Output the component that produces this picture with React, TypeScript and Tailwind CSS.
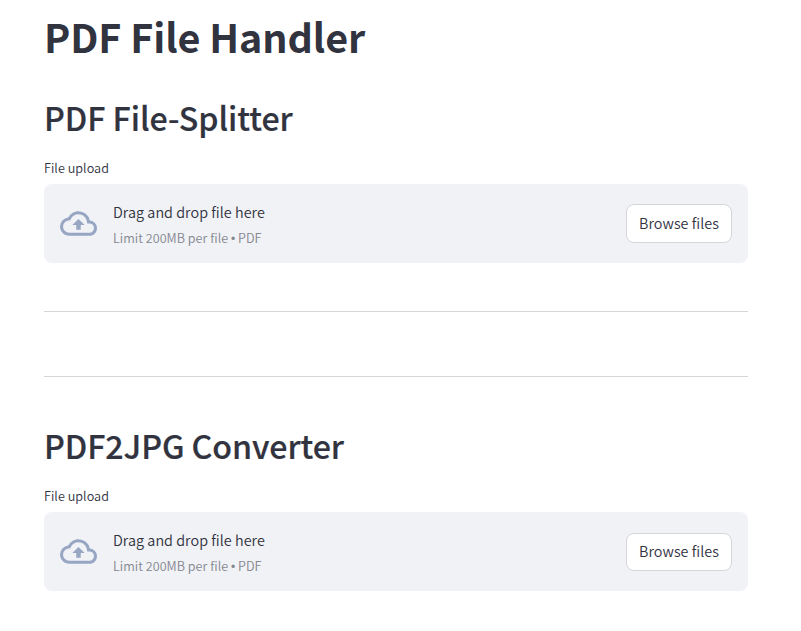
import React from "react";

function Uploader({ buttonClass }: { buttonClass: string }) {
  return (
    <div>
      <div className="flex h-6 items-center text-[12.6px] leading-[22px] tracking-[0.04px]">
        <span className="font-[350]">File upload</span>
      </div>
      <section className="mt-1 flex h-[79px] items-center rounded-lg bg-[#f0f2f6] px-4">
        <svg viewBox="0 0 24 24" className="h-[37px] w-[37px] shrink-0 fill-[#97a6c3]">
          <path d="M19.35 10.04A7.49 7.49 0 0 0 12 4C9.11 4 6.6 5.64 5.35 8.04A5.994 5.994 0 0 0 0 14c0 3.31 2.69 6 6 6h13c2.76 0 5-2.24 5-5 0-2.64-2.05-4.78-4.65-4.96zM19 18H6c-2.21 0-4-1.79-4-4 0-2.05 1.53-3.76 3.56-3.97l1.07-.11.5-.95A5.469 5.469 0 0 1 12 6c2.62 0 4.88 1.86 5.39 4.43l.3 1.5 1.53.11A2.98 2.98 0 0 1 22 15c0 1.65-1.35 3-3 3zM8 13h2.55v3h2.9v-3H16l-4-4z" />
        </svg>
        <div className="ml-4 flex flex-1 flex-col">
          <span className="h-[26px] text-[14.4px] font-[350] leading-[23px] tracking-[0.03px]">Drag and drop file here</span>
          <span className="h-[22px] text-[12.6px] font-[350] leading-[23px] tracking-[0.03px] text-[#85878f]">
            Limit 200MB per file <span className="font-['Liberation_Sans'] text-[12px] leading-none">•</span> PDF
          </span>
        </div>
        <button className={`flex w-[106px] justify-center rounded-lg border border-[#d5d6d9] bg-white text-[14.4px] font-[350] tracking-[0.03px] ${buttonClass}`}>
          Browse files
        </button>
      </section>
    </div>
  );
}

export default function App() {
  return (
    <main className="h-[631px] bg-white pl-11 pr-[53px] pt-2.5 font-['Noto_Sans_CJK_SC',sans-serif] text-[#31333f]">
      <h1 className="h-[54px] text-[39.5px] font-bold leading-[52px] tracking-[-0.1px]">PDF File Handler</h1>
      <h2 className="mt-[31px] h-[45px] text-[32.2px] font-medium leading-[44px] tracking-[-0.05px] [-webkit-text-stroke:0.2px_#31333f]">PDF File-Splitter</h2>
      <div className="mt-4"><Uploader buttonClass="h-[39px] leading-[36px]" /></div>
      <hr className="mt-12 border-[#d5d6d9]" />
      <hr className="mt-16 border-[#d5d6d9]" />
      <h2 className="mt-[46px] h-[46px] text-[32.2px] font-medium leading-[44px] tracking-[-0.08px] [-webkit-text-stroke:0.2px_#31333f]">PDF2JPG Converter</h2>
      <div className="mt-[15px]"><Uploader buttonClass="mt-px h-[38px] leading-[34px]" /></div>
    </main>
  );
}
